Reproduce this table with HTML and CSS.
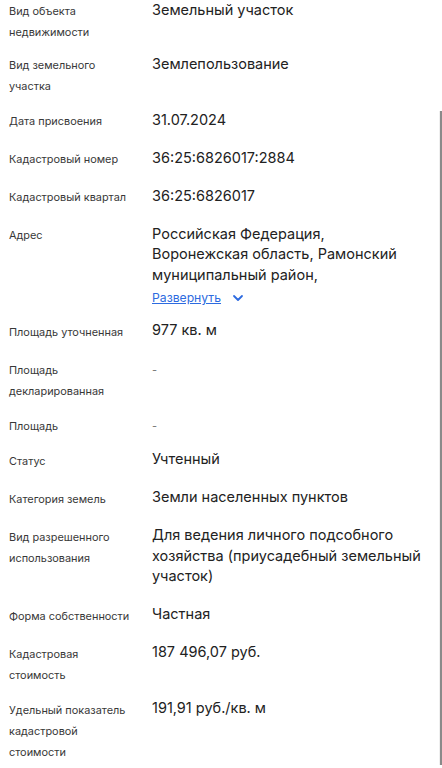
FILE: index.html
```html
<!DOCTYPE html>
<html lang="ru">
<head>
<meta charset="utf-8">
<link rel="stylesheet" href="styles.css">
</head>
<body>
<div class="list">
  <div class="row first"><div class="label">Вид объекта<br>недвижимости</div><div class="value">Земельный участок</div></div>
  <div class="row"><div class="label">Вид земельного<br>участка</div><div class="value">Землепользование</div></div>
  <div class="row"><div class="label">Дата присвоения</div><div class="value">31.07.2024</div></div>
  <div class="row"><div class="label">Кадастровый номер</div><div class="value">36:25:6826017:2884</div></div>
  <div class="row"><div class="label">Кадастровый квартал</div><div class="value">36:25:6826017</div></div>
  <div class="row"><div class="label">Адрес</div><div class="value addr">Российская Федерация,<br>Воронежская область, Рамонский<br>муниципальный район,
    <div class="more"><a class="link">Развернуть</a><svg class="chev" width="12" height="8" viewBox="0 0 12 8"><path d="M2 2l4 4 4-4" fill="none" stroke="#2d6be0" stroke-width="1.8" stroke-linecap="round" stroke-linejoin="round"/></svg></div></div></div>
  <div class="row"><div class="label">Площадь уточненная</div><div class="value">977 кв. м</div></div>
  <div class="row"><div class="label">Площадь<br>декларированная</div><div class="dash">-</div></div>
  <div class="row"><div class="label">Площадь</div><div class="dash">-</div></div>
  <div class="row"><div class="label">Статус</div><div class="value">Учтенный</div></div>
  <div class="row"><div class="label">Категория земель</div><div class="value">Земли населенных пунктов</div></div>
  <div class="row"><div class="label">Вид разрешенного<br>использования</div><div class="value">Для ведения личного подсобного<br>хозяйства (приусадебный земельный<br>участок)</div></div>
  <div class="row"><div class="label">Форма собственности</div><div class="value">Частная</div></div>
  <div class="row"><div class="label">Кадастровая<br>стоимость</div><div class="value">187 496,07 руб.</div></div>
  <div class="row"><div class="label">Удельный показатель<br>кадастровой<br>стоимости</div><div class="value">191,91 руб./кв. м</div></div>
</div>
<div class="scroll"></div>
</body>
</html>
```
FILE: styles.css
```css
html, body { margin: 0; padding: 0; background: #fff; }
body { font-family: Inter, "Noto Sans", sans-serif; color: #222; overflow: hidden; height: 768px; }
.list { display: flex; flex-direction: column; gap: 14px; padding: 0 0 0 9px; margin-top: 1px; }
.row { display: grid; grid-template-columns: 143px 1fr; align-items: start; }
.first { margin-bottom: -2px; }
.label { font-size: 10.9px; line-height: 21px; color: #383838; }
.value { font-size: 14.5px; line-height: 20.5px; color: #222; margin-top: -1.5px; padding-bottom: 5px; }
.addr { padding-bottom: 1.5px; }
.dash { font-size: 11px; line-height: 21px; color: #777; }
.more { display: flex; align-items: center; gap: 11px; margin-top: 4px; height: 17px; }
.link { font-size: 12.2px; line-height: 17px; color: #2d6be0; text-decoration: underline; }
.chev { display: block; }
.scroll { position: fixed; right: 0; top: 111px; bottom: 3px; width: 2px; background: #8a8a8a; border-left: 1px solid #efefef; }
```
